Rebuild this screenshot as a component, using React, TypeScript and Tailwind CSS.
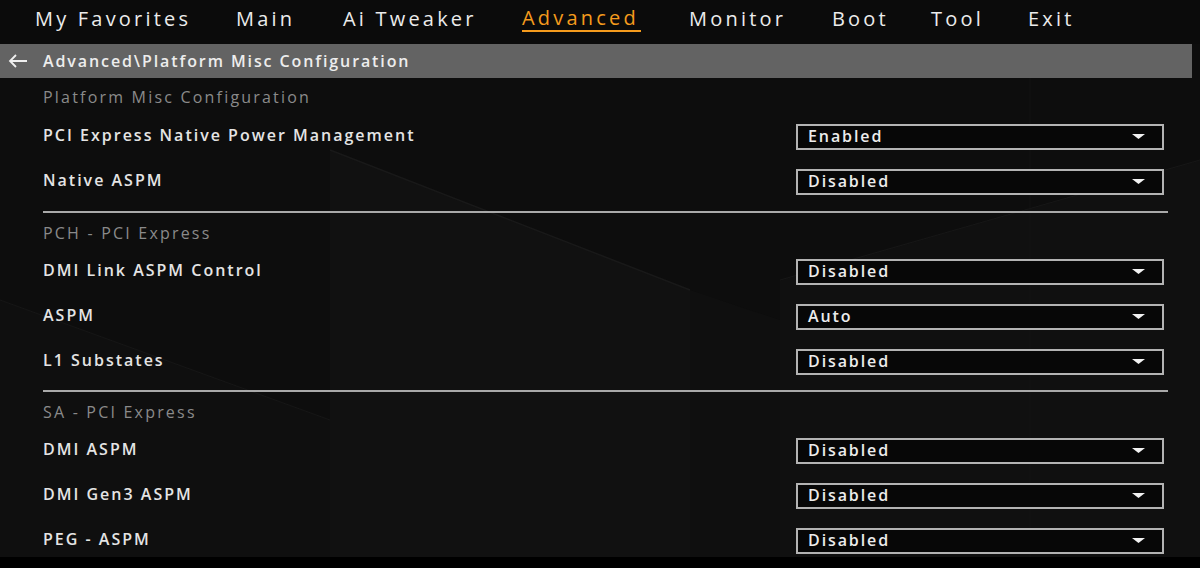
import React from "react";

const font = { fontFamily: '"Open Sans", "Noto Sans", "DejaVu Sans", sans-serif' };

function Dropdown({ value }: { value: string }) {
  return (
    <div className="w-[368px] h-[26px] border-2 border-[#b3b3b3] bg-[#070707] flex items-center justify-between pl-[10px] pr-[17px]">
      <span className="text-[16px] font-semibold text-[#ececec] tracking-[1.9px] leading-none -mt-[1px]">{value}</span>
      <svg width="13" height="5" viewBox="0 0 13 5">
        <polygon points="0,0 13,0 6.5,5" fill="#f2f2f2" />
      </svg>
    </div>
  );
}

function Row({ label, value }: { label: string; value: string }) {
  return (
    <div className="h-[45px] flex items-center justify-between pr-[36px]">
      <span className="text-[16px] font-semibold text-[#e4e4e4] tracking-[2px] -mt-[4px]">{label}</span>
      <Dropdown value={value} />
    </div>
  );
}

function Section({ title, first }: { title: string; first?: boolean }) {
  return (
    <div className={`h-[36px] flex items-center ${first ? "pt-[2px]" : "pt-[4px]"}`}>
      <span className="text-[16px] font-medium text-[#8a8a8a] tracking-[2.2px]">{title}</span>
    </div>
  );
}

function Divider({ mt }: { mt: string }) {
  return <div className={`h-[2px] bg-[#a9a9a9] mr-[32px] ${mt}`} />;
}

function NavItem({ label, w, active }: { label: string; w: string; active?: boolean }) {
  return (
    <div className={`${w} shrink-0 flex items-center`}>
      <span
        className={`text-[20px] font-medium tracking-[3.2px] leading-none ${
          active
            ? "text-[#f59b1d] border-b-2 border-[#f59b1d] pb-[2px] mt-[2px] pr-[2px]"
            : "text-[#ececec]"
        }`}
      >
        {label}
      </span>
    </div>
  );
}

export default function App() {
  return (
    <div className="w-[1200px] h-[568px] bg-black overflow-hidden" style={font}>
      <div className="relative w-[1200px] h-[557px] overflow-hidden bg-[#0d0d0d]">
        <svg className="absolute inset-0 pointer-events-none" width="1200" height="557" viewBox="0 0 1200 557">
          <polygon points="330,150 690,290 690,557 330,557" fill="#111111" />
          <polygon points="690,290 780,320 780,557 690,557" fill="#0f0f0f" />
          <polygon points="780,280 1200,160 1200,557 780,557" fill="#101010" />
          <polygon points="0,300 330,420 330,557 0,557" fill="#0f0f0f" />
          <line x1="330" y1="150" x2="690" y2="290" stroke="#191919" strokeWidth="1.5" />
          <line x1="0" y1="300" x2="330" y2="420" stroke="#171717" strokeWidth="1" />
          <line x1="780" y1="280" x2="1200" y2="160" stroke="#171717" strokeWidth="1" />
          <line x1="1030" y1="20" x2="1030" y2="557" stroke="#131313" strokeWidth="1" />
          <line x1="200" y1="0" x2="330" y2="30" stroke="#1e1e1e" strokeWidth="1.5" />
        </svg>

        <div className="relative">
          <div className="h-[44px] bg-[#0b0b0b]">
            <div className="h-[38px] flex items-stretch pl-[35px]">
              <NavItem label="My Favorites" w="w-[201px]" />
              <NavItem label="Main" w="w-[107px]" />
              <NavItem label="Ai Tweaker" w="w-[179px]" />
              <NavItem label="Advanced" w="w-[167px]" active />
              <NavItem label="Monitor" w="w-[143px]" />
              <NavItem label="Boot" w="w-[99px]" />
              <NavItem label="Tool" w="w-[97px]" />
              <NavItem label="Exit" w="w-[80px]" />
            </div>
          </div>

          <div className="w-[1192px] h-[34px] bg-[#636363] flex items-center">
            <svg className="ml-[8px]" width="20" height="14" viewBox="0 0 20 14">
              <path d="M19 7H2M8 1L2 7l6 6" fill="none" stroke="#f0f0f0" strokeWidth="1.8" />
            </svg>
            <span className="ml-[15px] text-[16px] font-semibold text-[#ededed] tracking-[1.9px]">
              Advanced\Platform Misc Configuration
            </span>
          </div>

          <div className="pl-[43px]">
            <Section title="Platform Misc Configuration" first />
            <Row label="PCI Express Native Power Management" value="Enabled" />
            <Row label="Native ASPM" value="Disabled" />
            <Divider mt="mt-[7px]" />
            <Section title="PCH - PCI Express" />
            <Row label="DMI Link ASPM Control" value="Disabled" />
            <Row label="ASPM" value="Auto" />
            <Row label="L1 Substates" value="Disabled" />
            <Divider mt="mt-[6px]" />
            <Section title="SA - PCI Express" />
            <Row label="DMI ASPM" value="Disabled" />
            <Row label="DMI Gen3 ASPM" value="Disabled" />
            <Row label="PEG - ASPM" value="Disabled" />
          </div>
        </div>
      </div>
    </div>
  );
}
